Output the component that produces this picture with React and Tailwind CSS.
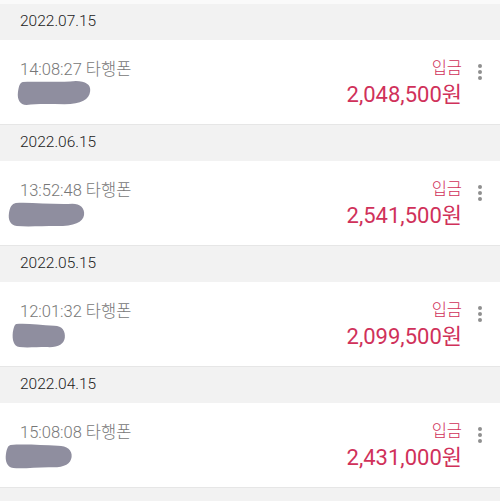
import React from 'react';

const items = [
  { date: '2022.07.15', time: '14:08:27', amount: '2,048,500', blob: 'ml-[17px] w-[76px]' },
  { date: '2022.06.15', time: '13:52:48', amount: '2,541,500', blob: 'ml-[8px] w-[78px]' },
  { date: '2022.05.15', time: '12:01:32', amount: '2,099,500', blob: 'ml-[12px] w-[65px]' },
  { date: '2022.04.15', time: '15:08:08', amount: '2,431,000', blob: 'ml-[5px] w-[73px]' },
];

const blobs = [
  'M6 1 C20 0 40 2 62 0 C72 0 78 4 77 11 C76 20 68 25 50 25 C36 25 22 24 10 26 C3 26 0 20 1 12 C2 5 3 2 6 1 Z',
  'M8 1 C24 0 46 3 66 2 C74 2 79 7 78 14 C77 22 68 26 50 26 C34 26 20 27 9 26 C2 25 0 19 1 12 C2 5 4 2 8 1 Z',
  'M5 1 C18 0 34 2 52 3 C62 3 66 9 65 16 C64 23 56 27 42 26 C30 26 18 27 9 26 C2 25 0 18 1 10 C2 5 3 2 5 1 Z',
  'M6 1 C20 0 40 1 58 2 C68 2 74 7 73 14 C72 22 64 26 48 25 C34 25 20 27 9 26 C2 25 0 18 1 11 C2 5 3 2 6 1 Z',
];

function Blob({ d, className }) {
  return (
    <svg viewBox="0 0 80 27" className={`block h-[25px] ${className}`} preserveAspectRatio="none">
      <path d={d} fill="#8f8e9f" />
    </svg>
  );
}

function Dots() {
  return (
    <div className="flex flex-col gap-[2.5px]">
      <span className="w-[3.5px] h-[3.5px] rounded-full bg-[#8f8f8f]" />
      <span className="w-[3.5px] h-[3.5px] rounded-full bg-[#8f8f8f]" />
      <span className="w-[3.5px] h-[3.5px] rounded-full bg-[#8f8f8f]" />
    </div>
  );
}

export default function App() {
  return (
    <div
      className="w-[500px] h-[501px] overflow-hidden bg-[#f2f2f2] font-light"
      style={{ fontFamily: 'Roboto, "Noto Sans CJK KR", sans-serif' }}
    >
      <div className="h-[4px] bg-[#fafafa]" />
      {items.map((item, i) => (
        <div key={item.date}>
          <div className="h-[36px] bg-[#f2f2f2] flex items-center px-[20px] text-[15.5px] text-[#222]">
            {item.date}
          </div>
          <div className="h-[85px] bg-white border-b border-[#e6e6e6] flex">
            <div className="flex-1 pt-[19px]">
              <div className="px-[20px] text-[16.5px] text-[#777] leading-[22px]">
                {item.time} 타행폰
              </div>
              <Blob d={blobs[i]} className={item.blob} />
            </div>
            <div className="flex flex-col items-end pt-[18px] text-[#d0315a]">
              <div className="text-[16.5px] leading-[22px]">입금</div>
              <div className="text-[22px] font-normal leading-[30px]">{item.amount}원</div>
            </div>
            <div className="w-[38px] flex pl-[16px] pt-[24px]">
              <Dots />
            </div>
          </div>
        </div>
      ))}
    </div>
  );
}
